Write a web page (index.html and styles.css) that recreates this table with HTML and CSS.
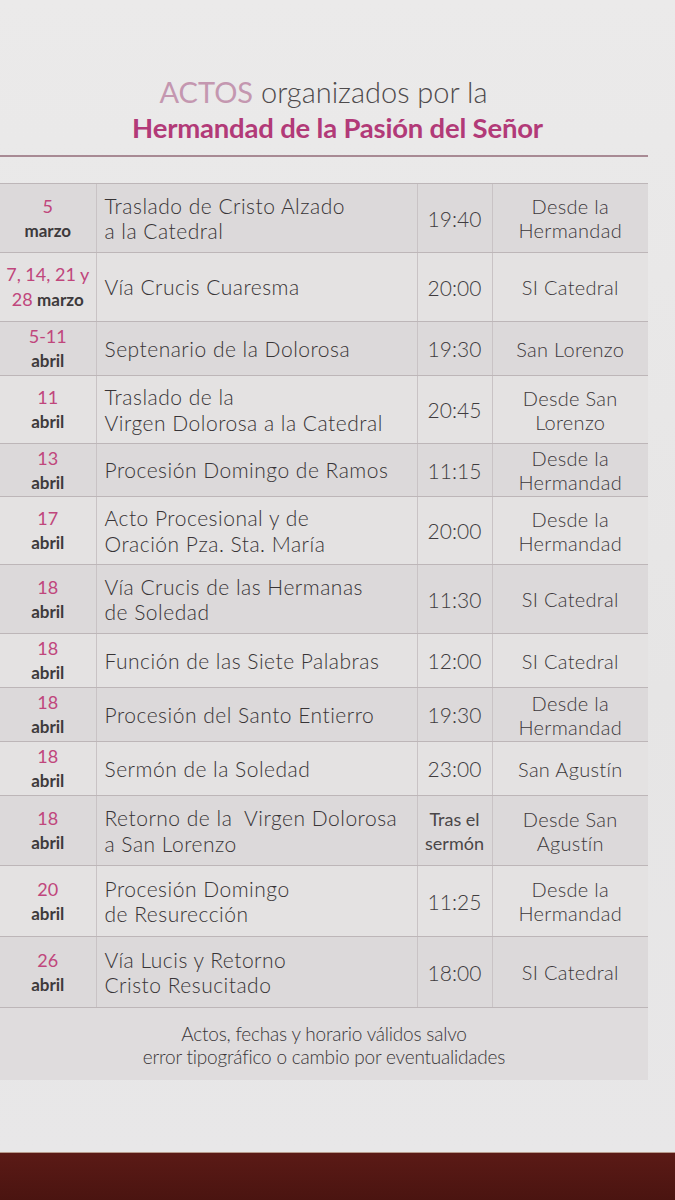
FILE: index.html
```html
<!DOCTYPE html>
<html lang="es">
<head>
<meta charset="utf-8">
<title>ACTOS organizados por la Hermandad de la Pasión del Señor</title>
<link rel="stylesheet" href="styles.css">
</head>
<body>
<div class="sheet">
  <header class="head">
    <div class="l1"><span class="actos">ACTOS</span> organizados por la</div>
    <div class="l2">Hermandad de la Pasión del Señor</div>
  </header>
  <div class="rule"></div>
  <table class="tbl">
    <colgroup><col class="c1"><col class="c2"><col class="c3"><col class="c4"></colgroup>
    <tr class="r h69 odd"><td class="d"><span class="n">5</span><br><span class="m">marzo</span></td><td class="a">Traslado de Cristo Alzado<br>a la Catedral</td><td class="t">19:40</td><td class="p">Desde la<br>Hermandad</td></tr>
    <tr class="r h69"><td class="d"><span class="n">7, 14, 21 y</span><br><span class="n">28</span> <span class="m">marzo</span></td><td class="a">Vía Crucis Cuaresma</td><td class="t">20:00</td><td class="p">SI Catedral</td></tr>
    <tr class="r h54 odd"><td class="d"><span class="n">5-11</span><br><span class="m">abril</span></td><td class="a">Septenario de la Dolorosa</td><td class="t">19:30</td><td class="p">San Lorenzo</td></tr>
    <tr class="r h68"><td class="d"><span class="n">11</span><br><span class="m">abril</span></td><td class="a">Traslado de la<br>Virgen Dolorosa a la Catedral</td><td class="t">20:45</td><td class="p">Desde San<br>Lorenzo</td></tr>
    <tr class="r h53 odd"><td class="d"><span class="n">13</span><br><span class="m">abril</span></td><td class="a">Procesión Domingo de Ramos</td><td class="t">11:15</td><td class="p">Desde la<br>Hermandad</td></tr>
    <tr class="r h68"><td class="d"><span class="n">17</span><br><span class="m">abril</span></td><td class="a">Acto Procesional y de<br>Oración Pza. Sta. María</td><td class="t">20:00</td><td class="p">Desde la<br>Hermandad</td></tr>
    <tr class="r h69 odd"><td class="d"><span class="n">18</span><br><span class="m">abril</span></td><td class="a">Vía Crucis de las Hermanas<br>de Soledad</td><td class="t">11:30</td><td class="p">SI Catedral</td></tr>
    <tr class="r h54"><td class="d"><span class="n">18</span><br><span class="m">abril</span></td><td class="a">Función de las Siete Palabras</td><td class="t">12:00</td><td class="p">SI Catedral</td></tr>
    <tr class="r h54 odd"><td class="d"><span class="n">18</span><br><span class="m">abril</span></td><td class="a">Procesión del Santo Entierro</td><td class="t">19:30</td><td class="p">Desde la<br>Hermandad</td></tr>
    <tr class="r h54"><td class="d"><span class="n">18</span><br><span class="m">abril</span></td><td class="a">Sermón de la Soledad</td><td class="t">23:00</td><td class="p">San Agustín</td></tr>
    <tr class="r h70 odd"><td class="d"><span class="n">18</span><br><span class="m">abril</span></td><td class="a">Retorno de la&nbsp; Virgen Dolorosa<br>a San Lorenzo</td><td class="t sm">Tras el<br>sermón</td><td class="p">Desde San<br>Agustín</td></tr>
    <tr class="r h71"><td class="d"><span class="n">20</span><br><span class="m">abril</span></td><td class="a">Procesión Domingo<br>de Resurección</td><td class="t">11:25</td><td class="p">Desde la<br>Hermandad</td></tr>
    <tr class="r h71 odd"><td class="d"><span class="n">26</span><br><span class="m">abril</span></td><td class="a">Vía Lucis y Retorno<br>Cristo Resucitado</td><td class="t">18:00</td><td class="p">SI Catedral</td></tr>
  </table>
  <div class="foot">Actos, fechas y horario válidos salvo<br>error tipográfico o cambio por eventualidades</div>
</div>
<div class="base"></div>
</body>
</html>
```
FILE: styles.css
```css
html, body { margin: 0; padding: 0; }
body {
  width: 675px;
  height: 1200px;
  overflow: hidden;
  background: #e9e8e7;
  font-family: Lato, "Open Sans", sans-serif;
  color: #4a4647;
}
.sheet {
  height: 1152px;
  background: linear-gradient(#ebeaea, #e6e5e5 60%, #e8e7e8);
}
.head {
  padding-top: 74px;
  text-align: center;
}
.l1 {
  font-size: 29px;
  line-height: 36px;
  color: #4e4a4c;
  font-weight: 300;
  padding-right: 28px;
}
.actos { color: #c497b0; font-weight: 400; }
.l2 {
  font-size: 27.5px;
  line-height: 36px;
  color: #b23a78;
  font-weight: 700;
  letter-spacing: -0.2px;
}
.rule {
  margin-top: 9px;
  width: 648px;
  height: 2px;
  background: #a88a94;
}
.tbl {
  margin-top: 26px;
  width: 648px;
  border-collapse: collapse;
  table-layout: fixed;
}
.c1 { width: 96px; }
.c2 { width: 321px; }
.c3 { width: 75px; }
.c4 { width: 156px; }
.tbl td {
  border-top: 1px solid #bdb6b8;
  border-bottom: 1px solid #bdb6b8;
  padding: 0;
  vertical-align: middle;
}
.tbl td + td { border-left: 1px solid #c9c3c5; }
.r { background: #e4e2e2; }
.r.odd { background: #dcd9da; }
.h53 { height: 53px; }
.h54 { height: 54px; }
.h68 { height: 68px; }
.h69 { height: 69px; }
.h70 { height: 70px; }
.h71 { height: 71px; }
.d {
  text-align: center;
  font-size: 17px;
  line-height: 24px;
}
.n { color: #c0467c; font-size: 18px; }
.m { color: #3e3a3c; font-weight: 700; }
.a {
  padding-left: 8px !important;
  font-size: 21px;
  line-height: 25.2px;
  letter-spacing: 0.5px;
  color: #383436;
  font-weight: 300;
  white-space: nowrap;
}
.t {
  text-align: center;
  font-size: 21px;
  color: #403c3e;
  font-weight: 300;
}
.t.sm { font-size: 18px; line-height: 24px; font-weight: 400; color: #4a4648; }
.p {
  text-align: center;
  font-size: 20px;
  line-height: 24px;
  letter-spacing: 0.3px;
  color: #3c383a;
  font-weight: 300;
}
.foot {
  width: 648px;
  height: 72px;
  box-sizing: border-box;
  padding-top: 14px;
  background: #dfdcdd;
  text-align: center;
  font-size: 19px;
  line-height: 23px;
  color: #3a3638;
  font-weight: 300;
  letter-spacing: -0.2px;
}
.base {
  height: 48px;
  background: linear-gradient(#5b1a16, #4a1410);
  border-top: 1px solid #b79a8c;
}
```
